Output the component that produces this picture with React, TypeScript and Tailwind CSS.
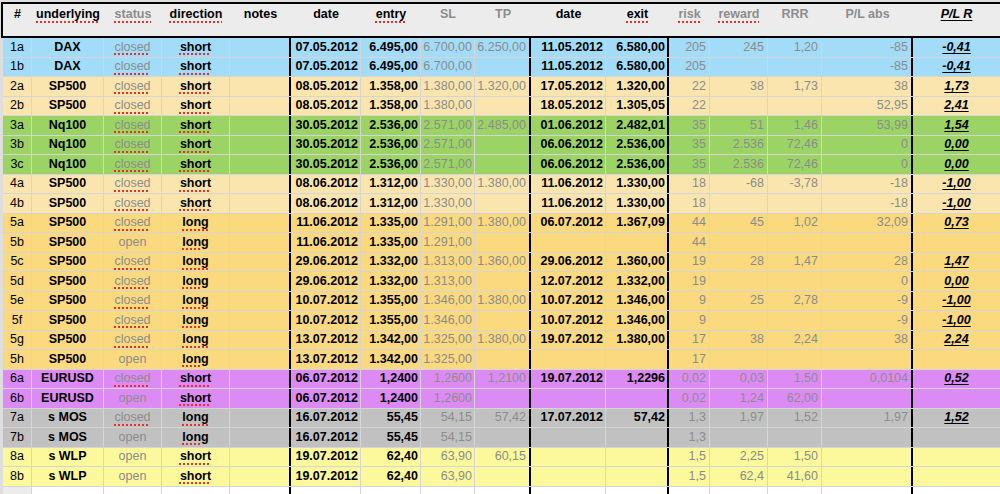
import React from "react";
import clsx from "clsx";

type Trade = {
  id: string;
  u: string;
  status: "closed" | "open";
  dir: "short" | "long";
  d1: string;
  entry: string;
  sl: string;
  tp: string;
  d2: string;
  exit: string;
  risk: string;
  reward: string;
  rrr: string;
  pl: string;
  plr: string;
  bg: string;
};

const BLUE = "bg-[#a2dcf8]";
const PEACH = "bg-[#fbe5ae]";
const GREEN = "bg-[#9bd465]";
const ORANGE = "bg-[#fad97f]";
const PURPLE = "bg-[#dc8bf5]";
const GREY = "bg-[#c1c1c1]";
const YELLOW = "bg-[#fbf99b]";

const trades: Trade[] = [
  { id: "1a", u: "DAX", status: "closed", dir: "short", d1: "07.05.2012", entry: "6.495,00", sl: "6.700,00", tp: "6.250,00", d2: "11.05.2012", exit: "6.580,00", risk: "205", reward: "245", rrr: "1,20", pl: "-85", plr: "-0,41", bg: BLUE },
  { id: "1b", u: "DAX", status: "closed", dir: "short", d1: "07.05.2012", entry: "6.495,00", sl: "6.700,00", tp: "", d2: "11.05.2012", exit: "6.580,00", risk: "205", reward: "", rrr: "", pl: "-85", plr: "-0,41", bg: BLUE },
  { id: "2a", u: "SP500", status: "closed", dir: "short", d1: "08.05.2012", entry: "1.358,00", sl: "1.380,00", tp: "1.320,00", d2: "17.05.2012", exit: "1.320,00", risk: "22", reward: "38", rrr: "1,73", pl: "38", plr: "1,73", bg: PEACH },
  { id: "2b", u: "SP500", status: "closed", dir: "short", d1: "08.05.2012", entry: "1.358,00", sl: "1.380,00", tp: "", d2: "18.05.2012", exit: "1.305,05", risk: "22", reward: "", rrr: "", pl: "52,95", plr: "2,41", bg: PEACH },
  { id: "3a", u: "Nq100", status: "closed", dir: "short", d1: "30.05.2012", entry: "2.536,00", sl: "2.571,00", tp: "2.485,00", d2: "01.06.2012", exit: "2.482,01", risk: "35", reward: "51", rrr: "1,46", pl: "53,99", plr: "1,54", bg: GREEN },
  { id: "3b", u: "Nq100", status: "closed", dir: "short", d1: "30.05.2012", entry: "2.536,00", sl: "2.571,00", tp: "", d2: "06.06.2012", exit: "2.536,00", risk: "35", reward: "2.536", rrr: "72,46", pl: "0", plr: "0,00", bg: GREEN },
  { id: "3c", u: "Nq100", status: "closed", dir: "short", d1: "30.05.2012", entry: "2.536,00", sl: "2.571,00", tp: "", d2: "06.06.2012", exit: "2.536,00", risk: "35", reward: "2.536", rrr: "72,46", pl: "0", plr: "0,00", bg: GREEN },
  { id: "4a", u: "SP500", status: "closed", dir: "short", d1: "08.06.2012", entry: "1.312,00", sl: "1.330,00", tp: "1.380,00", d2: "11.06.2012", exit: "1.330,00", risk: "18", reward: "-68", rrr: "-3,78", pl: "-18", plr: "-1,00", bg: PEACH },
  { id: "4b", u: "SP500", status: "closed", dir: "short", d1: "08.06.2012", entry: "1.312,00", sl: "1.330,00", tp: "", d2: "11.06.2012", exit: "1.330,00", risk: "18", reward: "", rrr: "", pl: "-18", plr: "-1,00", bg: PEACH },
  { id: "5a", u: "SP500", status: "closed", dir: "long", d1: "11.06.2012", entry: "1.335,00", sl: "1.291,00", tp: "1.380,00", d2: "06.07.2012", exit: "1.367,09", risk: "44", reward: "45", rrr: "1,02", pl: "32,09", plr: "0,73", bg: ORANGE },
  { id: "5b", u: "SP500", status: "open", dir: "long", d1: "11.06.2012", entry: "1.335,00", sl: "1.291,00", tp: "", d2: "", exit: "", risk: "44", reward: "", rrr: "", pl: "", plr: "", bg: ORANGE },
  { id: "5c", u: "SP500", status: "closed", dir: "long", d1: "29.06.2012", entry: "1.332,00", sl: "1.313,00", tp: "1.360,00", d2: "29.06.2012", exit: "1.360,00", risk: "19", reward: "28", rrr: "1,47", pl: "28", plr: "1,47", bg: ORANGE },
  { id: "5d", u: "SP500", status: "closed", dir: "long", d1: "29.06.2012", entry: "1.332,00", sl: "1.313,00", tp: "", d2: "12.07.2012", exit: "1.332,00", risk: "19", reward: "", rrr: "", pl: "0", plr: "0,00", bg: ORANGE },
  { id: "5e", u: "SP500", status: "closed", dir: "long", d1: "10.07.2012", entry: "1.355,00", sl: "1.346,00", tp: "1.380,00", d2: "10.07.2012", exit: "1.346,00", risk: "9", reward: "25", rrr: "2,78", pl: "-9", plr: "-1,00", bg: ORANGE },
  { id: "5f", u: "SP500", status: "closed", dir: "long", d1: "10.07.2012", entry: "1.355,00", sl: "1.346,00", tp: "", d2: "10.07.2012", exit: "1.346,00", risk: "9", reward: "", rrr: "", pl: "-9", plr: "-1,00", bg: ORANGE },
  { id: "5g", u: "SP500", status: "closed", dir: "long", d1: "13.07.2012", entry: "1.342,00", sl: "1.325,00", tp: "1.380,00", d2: "19.07.2012", exit: "1.380,00", risk: "17", reward: "38", rrr: "2,24", pl: "38", plr: "2,24", bg: ORANGE },
  { id: "5h", u: "SP500", status: "open", dir: "long", d1: "13.07.2012", entry: "1.342,00", sl: "1.325,00", tp: "", d2: "", exit: "", risk: "17", reward: "", rrr: "", pl: "", plr: "", bg: ORANGE },
  { id: "6a", u: "EURUSD", status: "closed", dir: "short", d1: "06.07.2012", entry: "1,2400", sl: "1,2600", tp: "1,2100", d2: "19.07.2012", exit: "1,2296", risk: "0,02", reward: "0,03", rrr: "1,50", pl: "0,0104", plr: "0,52", bg: PURPLE },
  { id: "6b", u: "EURUSD", status: "open", dir: "short", d1: "06.07.2012", entry: "1,2400", sl: "1,2600", tp: "", d2: "", exit: "", risk: "0,02", reward: "1,24", rrr: "62,00", pl: "", plr: "", bg: PURPLE },
  { id: "7a", u: "s MOS", status: "closed", dir: "long", d1: "16.07.2012", entry: "55,45", sl: "54,15", tp: "57,42", d2: "17.07.2012", exit: "57,42", risk: "1,3", reward: "1,97", rrr: "1,52", pl: "1,97", plr: "1,52", bg: GREY },
  { id: "7b", u: "s MOS", status: "open", dir: "long", d1: "16.07.2012", entry: "55,45", sl: "54,15", tp: "", d2: "", exit: "", risk: "1,3", reward: "", rrr: "", pl: "", plr: "", bg: GREY },
  { id: "8a", u: "s WLP", status: "open", dir: "short", d1: "19.07.2012", entry: "62,40", sl: "63,90", tp: "60,15", d2: "", exit: "", risk: "1,5", reward: "2,25", rrr: "1,50", pl: "", plr: "", bg: YELLOW },
  { id: "8b", u: "s WLP", status: "open", dir: "short", d1: "19.07.2012", entry: "62,40", sl: "63,90", tp: "", d2: "", exit: "", risk: "1,5", reward: "62,4", rrr: "41,60", pl: "", plr: "", bg: YELLOW },
];

const cols =
  "grid grid-cols-[29px_72px_58px_68px_61px_70px_60px_54px_56px_75px_63px_41px_58px_54px_91px_87px]";
const thin = "border-r border-[#d5d5d5]";
const thick = "border-r-2 border-black";
const grey = "text-[#8c8c8c]";
const squiggle =
  "underline decoration-dotted decoration-[#e8302a] decoration-2 underline-offset-[3px]";

const Cell = ({
  children,
  className,
}: {
  children?: React.ReactNode;
  className?: string;
}) => (
  <div className={clsx("flex items-center whitespace-nowrap overflow-hidden", className)}>
    {children}
  </div>
);

const TradeRow = ({ t }: { t: Trade }) => (
  <div className={clsx(cols, "h-[19.5px] border-b border-[#d5d5d5]", t.bg)}>
    <Cell className={clsx(thin, "justify-center")}>{t.id}</Cell>
    <Cell className={clsx(thin, "justify-center font-bold")}>{t.u}</Cell>
    <Cell className={clsx(thin, "justify-center", grey)}>
      <span className={t.status === "closed" ? squiggle : ""}>{t.status}</span>
    </Cell>
    <Cell className={clsx(thin, "justify-center font-bold")}>
      <span className={squiggle}>{t.dir}</span>
    </Cell>
    <Cell className={thick} />
    <Cell className={clsx(thin, "justify-end pr-[2px] font-bold")}>{t.d1}</Cell>
    <Cell className={clsx(thin, "justify-end pr-[2px] font-bold")}>{t.entry}</Cell>
    <Cell className={clsx(thin, "justify-end pr-[2px]", grey)}>{t.sl}</Cell>
    <Cell className={clsx(thick, "justify-end pr-[3px]", grey)}>{t.tp}</Cell>
    <Cell className={clsx(thin, "justify-end pr-[2px] font-bold")}>{t.d2}</Cell>
    <Cell className={clsx(thick, "justify-end pr-[2px] font-bold")}>{t.exit}</Cell>
    <Cell className={clsx(thin, "justify-end pr-[3px]", grey)}>{t.risk}</Cell>
    <Cell className={clsx(thin, "justify-end pr-[3px]", grey)}>{t.reward}</Cell>
    <Cell className={clsx(thin, "justify-end pr-[3px]", grey)}>{t.rrr}</Cell>
    <Cell className={clsx(thick, "justify-end pr-[3px]", grey)}>{t.pl}</Cell>
    <Cell className="justify-center font-bold italic">
      <span className="underline underline-offset-2">{t.plr}</span>
    </Cell>
  </div>
);

const Head = ({
  children,
  className,
}: {
  children?: React.ReactNode;
  className?: string;
}) => (
  <div className={clsx("flex justify-center pt-[3px] font-bold whitespace-nowrap", className)}>
    {children}
  </div>
);

export default function App() {
  return (
    <div className="w-[1000px] h-[494px] overflow-hidden bg-[#dedede] font-['Liberation_Sans',Arial,sans-serif] text-[12.5px] leading-[15px] text-black">
      <div className="mt-[2px] ml-[1px] h-[36px] border-l-2 border-t-2 border-b-2 border-black bg-[#ececec]">
        <div className={cols}>
          <Head>#</Head>
          <Head>
            <span className={squiggle}>underlying</span>
          </Head>
          <Head className={grey}>
            <span className={squiggle}>status</span>
          </Head>
          <Head>
            <span className={squiggle}>direction</span>
          </Head>
          <Head>notes</Head>
          <Head>date</Head>
          <Head>
            <span className={squiggle}>entry</span>
          </Head>
          <Head className={grey}>SL</Head>
          <Head className={grey}>TP</Head>
          <Head>date</Head>
          <Head>
            <span className={squiggle}>exit</span>
          </Head>
          <Head className={grey}>
            <span className={squiggle}>risk</span>
          </Head>
          <Head className={grey}>
            <span className={squiggle}>reward</span>
          </Head>
          <Head className={grey}>RRR</Head>
          <Head className={grey}>P/L abs</Head>
          <Head className="italic">
            <span className="underline underline-offset-2">P/L R</span>
          </Head>
        </div>
      </div>
      <div className="ml-[3px]">
        {trades.map((t) => (
          <TradeRow key={t.id} t={t} />
        ))}
        <div className={clsx(cols, "h-[20px] bg-white")}>
          <Cell className={clsx(thin, "bg-[#ececec]")} />
          <Cell className={thin} />
          <Cell className={thin} />
          <Cell className={thin} />
          <Cell className={thick} />
          <Cell className={thin} />
          <Cell className={thin} />
          <Cell className={thin} />
          <Cell className={thick} />
          <Cell className={thin} />
          <Cell className={thick} />
          <Cell className={thin} />
          <Cell className={thin} />
          <Cell className={thin} />
          <Cell className={thick} />
          <Cell />
        </div>
      </div>
    </div>
  );
}
